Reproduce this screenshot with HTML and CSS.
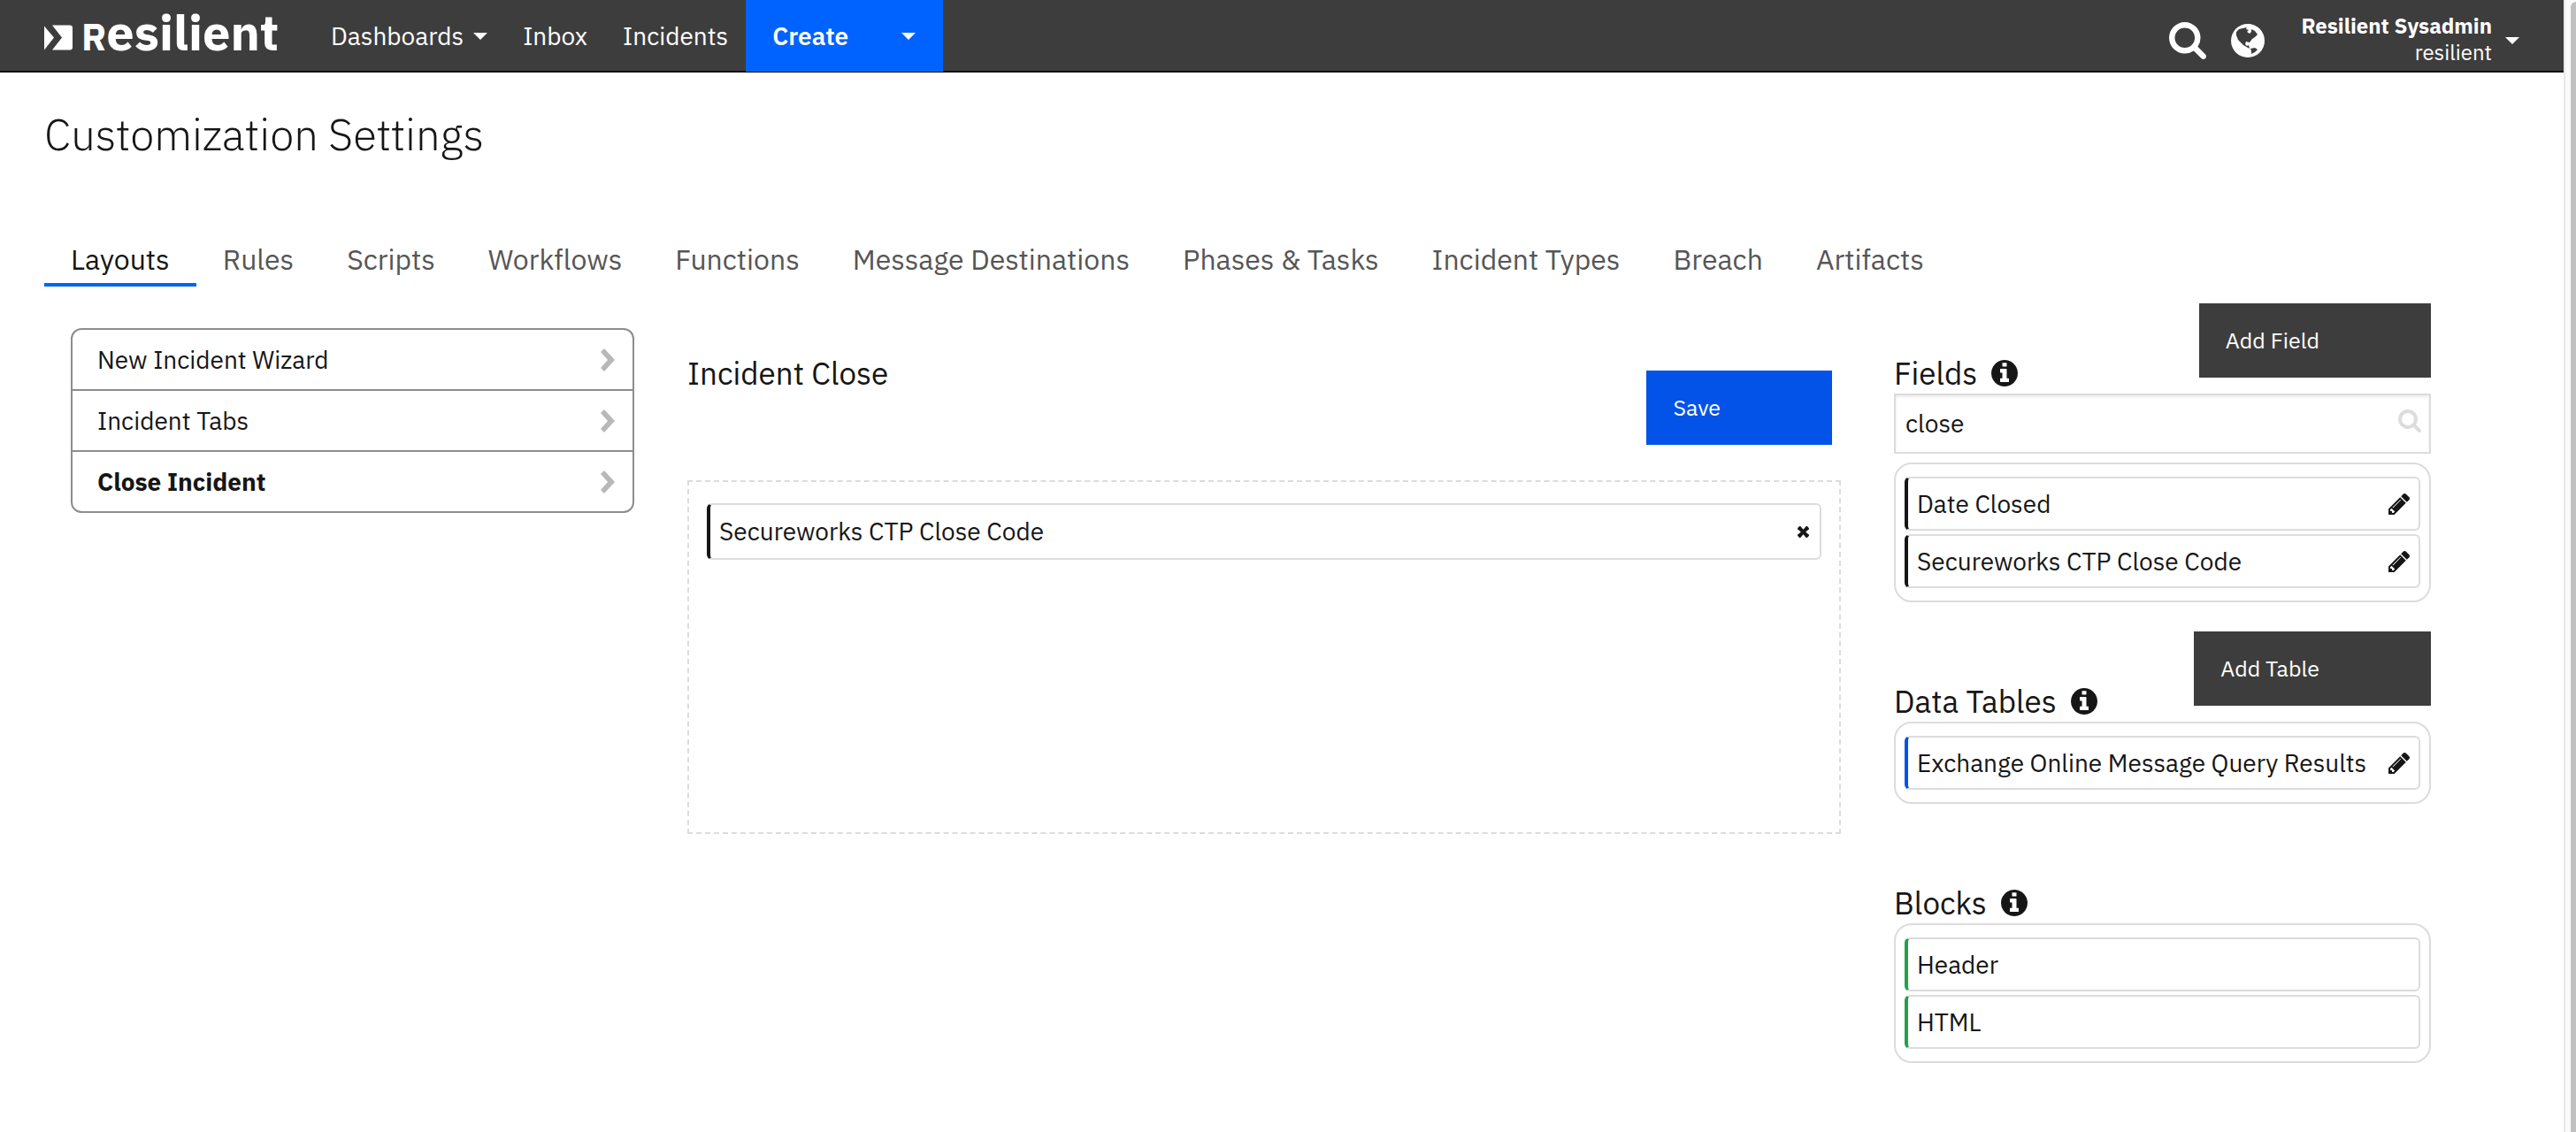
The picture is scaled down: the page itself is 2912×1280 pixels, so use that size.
FILE: index.html
```html
<!DOCTYPE html>
<html lang="en">
<head>
<meta charset="utf-8">
<title>Customization Settings</title>
<link rel="stylesheet" href="styles.css">
</head>
<body>
<svg class="sprite" aria-hidden="true">
  <symbol id="search" viewBox="64 128 1664 1664"><path d="M1216 832q0-185-131.500-316.500t-316.500-131.500-316.500 131.500-131.500 316.500 131.500 316.500 316.500 131.500 316.500-131.500 131.500-316.500zm512 832q0 52-38 90t-90 38q-54 0-90-38l-343-342q-179 124-399 124-143 0-273.500-55.500t-225-150-150-225-55.500-273.500 55.500-273.500 150-225 225-150 273.500-55.500 273.500 55.500 225 150 150 225 55.500 273.500q0 220-124 399l343 343q37 37 37 90z"/></symbol>
  <symbol id="info" viewBox="128 128 1536 1536"><path d="M1152 1376v-160q0-14-9-23t-23-9h-96v-512q0-14-9-23t-23-9h-320q-14 0-23 9t-9 23v160q0 14 9 23t23 9h96v320h-96q-14 0-23 9t-9 23v160q0 14 9 23t23 9h448q14 0 23-9t9-23zm-128-896v-160q0-14-9-23t-23-9h-192q-14 0-23 9t-9 23v160q0 14 9 23t23 9h192q14 0 23-9t9-23zm640 416q0 209-103 385.500t-279.500 279.500-385.500 103-385.500-103-279.500-279.500-103-385.500 103-385.500 279.500-279.500 385.500-103 385.500 103 279.500 279.500 103 385.500z"/></symbol>
  <symbol id="pencil" viewBox="128 149 1515 1515"><path d="M491 1536l91-91-235-235-91 91v107h128v128h107zm523-928q0-22-22-22-10 0-17 7l-542 542q-7 7-7 17 0 22 22 22 10 0 17-7l542-542q7-7 7-17zm-54-192l416 416-832 832h-416v-416zm683 96q0 53-37 90l-166 166-416-416 166-165q36-38 90-38 53 0 91 38l235 234q37 39 37 91z"/></symbol>
  <symbol id="caret" viewBox="0 0 16 8"><path d="M0 0h16L8 8z"/></symbol>
  <symbol id="chevron" viewBox="0 0 16 26"><path d="M4 0L16 13 4 26 0 22l8-9-8-9z"/></symbol>
  <symbol id="cross" viewBox="0 0 12 12"><path d="M0 2l2-2h1l3 3.500L9 0h1l2 2v1L8.500 6 12 9v1l-2 2H9L6 8.500 3 12H2l-2-2V9l3.500-3L0 3z"/></symbol>
</svg>
<div class="window">
  <div class="page">
    <header class="topbar">
      <a class="brand" href="#" aria-label="Resilient">
        <svg class="brand-mark" viewBox="0 0 32 28"><path d="M0 1l11 13L0 28zM9 0h20q3 0 3 3v22q0 3-3 3H9l11-14z"/></svg>
        <span class="brand-name"><span class="brand-cap">R</span>esilient</span>
      </a>
      <nav class="topnav">
        <a href="#">Dashboards<svg class="caret"><use href="#caret"/></svg></a>
        <a href="#">Inbox</a>
        <a href="#">Incidents</a>
      </nav>
      <div class="create">
        <button class="create-main" type="button">Create</button>
        <button class="create-more" type="button" aria-label="More create options"><svg class="caret"><use href="#caret"/></svg></button>
      </div>
      <div class="tools">
        <button class="tool" type="button" aria-label="Search"><svg class="tool-search"><use href="#search"/></svg></button>
        <button class="tool" type="button" aria-label="Language"><svg class="tool-globe" viewBox="0 0 38 38"><circle cx="19" cy="19" r="19"/><path class="land" d="M6 9l3-3 4-1 5-1-1 2 3 1-2 2 3 2 2-2V6l4 2 3 4-3 3-3 2-3 4-4-1-1 3 2 2 2-1 1 4-7-4-6-6-2-5zM22 28l5-1 3 2-3 3-4 2v-3z"/></svg></button>
        <button class="account" type="button">
          <span class="who"><strong>Resilient Sysadmin</strong><span>resilient</span></span>
          <svg class="caret"><use href="#caret"/></svg>
        </button>
      </div>
    </header>

    <main>
      <h1>Customization Settings</h1>
      <nav class="tabs">
        <a class="current" href="#" aria-current="page">Layouts</a>
        <a href="#">Rules</a>
        <a href="#">Scripts</a>
        <a href="#">Workflows</a>
        <a href="#">Functions</a>
        <a href="#">Message Destinations</a>
        <a href="#">Phases &amp; Tasks</a>
        <a href="#">Incident Types</a>
        <a href="#">Breach</a>
        <a href="#">Artifacts</a>
      </nav>

      <div class="columns">
        <nav class="side">
          <a href="#">New Incident Wizard<svg class="chevron"><use href="#chevron"/></svg></a>
          <a href="#">Incident Tabs<svg class="chevron"><use href="#chevron"/></svg></a>
          <a class="current" href="#">Close Incident<svg class="chevron"><use href="#chevron"/></svg></a>
        </nav>

        <section class="editor">
          <div class="editor-head">
            <h2>Incident Close</h2>
            <button class="btn primary" type="button">Save</button>
          </div>
          <ul class="dropzone">
            <li class="item">Secureworks CTP Close Code<button class="icon-btn" type="button" aria-label="Remove"><svg class="cross"><use href="#cross"/></svg></button></li>
          </ul>
        </section>

        <aside class="palette">
          <section class="group">
            <div class="group-head">
              <h2>Fields<svg class="info"><use href="#info"/></svg></h2>
              <button class="btn" type="button">Add Field</button>
            </div>
            <label class="search">
              <input type="text" value="close" aria-label="Search fields">
              <svg class="search-icon"><use href="#search"/></svg>
            </label>
            <ul class="box">
              <li class="item">Date Closed<button class="icon-btn" type="button" aria-label="Edit"><svg class="pencil"><use href="#pencil"/></svg></button></li>
              <li class="item">Secureworks CTP Close Code<button class="icon-btn" type="button" aria-label="Edit"><svg class="pencil"><use href="#pencil"/></svg></button></li>
            </ul>
          </section>
          <section class="group">
            <div class="group-head">
              <h2>Data Tables<svg class="info"><use href="#info"/></svg></h2>
              <button class="btn" type="button">Add Table</button>
            </div>
            <ul class="box">
              <li class="item table">Exchange Online Message Query Results<button class="icon-btn" type="button" aria-label="Edit"><svg class="pencil"><use href="#pencil"/></svg></button></li>
            </ul>
          </section>
          <section class="group">
            <div class="group-head">
              <h2>Blocks<svg class="info"><use href="#info"/></svg></h2>
            </div>
            <ul class="box">
              <li class="item block">Header</li>
              <li class="item block">HTML</li>
            </ul>
          </section>
        </aside>
      </div>
    </main>
  </div>
  <div class="scrollbar"><div class="thumb"></div></div>
</div>
</body>
</html>
```
FILE: styles.css
```css
* {
  box-sizing: border-box;
}

body {
  margin: 0;
  background: #fff;
  color: #161616;
  font-family: "IBM Plex Sans", "Noto Sans", sans-serif;
  font-size: 28px;
  line-height: 36px;
}

h1,
h2,
ul {
  margin: 0;
  padding: 0;
  list-style: none;
}

a {
  color: inherit;
  text-decoration: none;
}

button,
input {
  border: 0;
  border-radius: 0;
  background: none;
  color: inherit;
  font: inherit;
}

button {
  padding: 0;
  cursor: pointer;
}

svg {
  flex: none;
  fill: currentColor;
}

.sprite {
  display: none;
}

.window {
  display: flex;
  min-height: 100vh;
}

.page {
  flex: 1;
  min-width: 0;
}

/* Top bar */

.topbar {
  display: flex;
  height: 82px;
  padding-left: 50px;
  border-bottom: 2px solid #0c0c0c;
  background: #3d3d3d;
  color: #fff;
}

.brand {
  display: flex;
  align-items: flex-end;
  gap: 10px;
  width: 324px;
  height: 57px;
}

.brand-mark {
  width: 32px;
  height: 29px;
}

.brand-name {
  font-size: 56px;
  font-weight: 700;
  line-height: 42px;
}

.brand-cap {
  font-size: 42px;
  line-height: 0;
}

.topnav {
  display: flex;
  align-items: center;
  gap: 40px;
  margin-right: 20px;
  padding-top: 2px;
}

.topnav a {
  display: flex;
  align-items: center;
  gap: 11px;
}

.caret {
  width: 16px;
  height: 8px;
}

.create {
  display: flex;
  width: 223px;
  height: 81px;
  background: #0062ff;
}

.create-main {
  flex: 1;
  padding-left: 30px;
  font-weight: 600;
  text-align: left;
}

.create-more {
  display: flex;
  align-items: center;
  padding: 0 31px;
}

.tools {
  display: flex;
  align-items: center;
  gap: 28px;
  margin-left: auto;
  padding-right: 50px;
}

.tool {
  display: flex;
  padding-top: 12px;
}

.tool-search {
  width: 42px;
  height: 42px;
}

.tool-globe {
  width: 38px;
  height: 38px;
}

.land {
  fill: #3d3d3d;
}

.account {
  display: flex;
  align-items: center;
  gap: 15px;
  padding: 8px 0 0 13px;
  font-size: 24px;
  line-height: 30px;
  text-align: right;
}

.who {
  display: grid;
}

.account .caret {
  margin-top: 4px;
}

/* Page heading and tabs */

h1 {
  padding: 40px 50px 0;
  font-size: 49px;
  font-weight: 300;
  line-height: 60px;
}

.tabs {
  display: flex;
  margin: 81px 50px 0;
  color: #565656;
  font-size: 32px;
  line-height: 40px;
}

.tabs a {
  padding: 10px 30px 7px;
  border-bottom: 4px solid transparent;
}

.tabs .current {
  border-color: #0062ff;
  color: #161616;
}

.columns {
  display: grid;
  grid-template-columns: 637fr 1304fr 607fr;
  gap: 60px;
  align-items: start;
  padding: 19px 150px 40px 80px;
}

/* Layout list */

.side {
  margin-top: 28px;
  border: 2px solid #8d8d8d;
  border-radius: 12px;
}

.side a {
  display: flex;
  align-items: center;
  justify-content: space-between;
  box-sizing: content-box;
  height: 66px;
  padding: 1px 20px 0 28px;
}

.side a + a {
  border-top: 2px solid #8d8d8d;
}

.side .current {
  font-weight: 700;
}

.chevron {
  width: 16px;
  height: 26px;
  color: #b8b8b8;
}

/* Layout editor */

h2 {
  display: flex;
  align-items: center;
  gap: 16px;
  font-size: 35px;
  font-weight: 400;
  line-height: 46px;
}

.editor {
  padding-top: 56px;
}

.editor-head {
  display: flex;
  align-items: flex-start;
  justify-content: space-between;
  padding-right: 10px;
}

.btn {
  height: 84px;
  padding: 0 126px 0 30px;
  background: #3d3d3d;
  color: #fff;
  font-size: 25px;
}

.primary {
  margin-top: 20px;
  background: #0353e9;
}

.dropzone {
  min-height: 400px;
  margin-top: 40px;
  padding: 24px 20px;
  border: 2px dashed #dcdcdc;
}

.item {
  display: flex;
  align-items: center;
  justify-content: space-between;
  height: 61px;
  padding: 0 10px;
  border: 2px solid #dcdcdc;
  border-left: 4px solid #161616;
  border-radius: 6px;
}

.dropzone .item {
  height: 64px;
  padding-right: 12px;
}

.icon-btn {
  display: flex;
}

.cross {
  width: 13px;
  height: 13px;
}

.pencil {
  width: 24px;
  height: 24px;
}

/* Palette */

.group-head {
  display: flex;
  align-items: flex-end;
  justify-content: space-between;
  min-height: 102px;
}

.group + .group {
  margin-top: 33px;
}

.group-head .btn {
  margin-bottom: 18px;
}

.info {
  width: 30px;
  height: 30px;
}

.search {
  display: flex;
  height: 68px;
  margin-bottom: 10px;
  padding: 0 9px 0 11px;
  border: 2px solid #dcdcdc;
  box-shadow: inset 0 2px 3px #ececec;
}

.search input {
  flex: 1;
  min-width: 0;
  padding: 0;
  outline: 0;
}

.search-icon {
  width: 26px;
  height: 26px;
  margin-top: 16px;
  color: #dcdcdc;
}

.box {
  display: grid;
  gap: 4px;
  padding: 14px 10px;
  border: 2px solid #dcdcdc;
  border-radius: 20px;
}

.table {
  border-left-color: #0353e9;
}

.block {
  border-left-color: #24a148;
}

/* Page scrollbar */

.scrollbar {
  width: 14px;
  padding: 2px 0 0 6px;
  border-left: 2px solid #e8e8e8;
  background: #fafafa;
}

.thumb {
  height: 100%;
  border-radius: 6px 0 0 0;
  background: #c1c1c1;
}
```
